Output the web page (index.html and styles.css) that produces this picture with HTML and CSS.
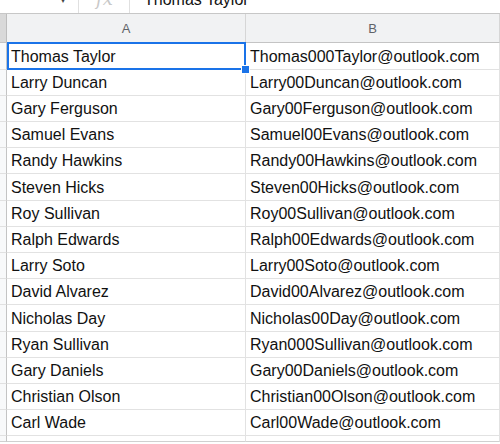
FILE: index.html
```html
<!DOCTYPE html>
<html>
<head>
<meta charset="utf-8">
<link rel="stylesheet" href="styles.css">
</head>
<body>
<div class="formula-bar">
  <span class="caret">▾</span>
  <span class="divider"></span>
  <span class="fx">fx</span>
  <span class="divider"></span>
  <span class="formula-text">Thomas Taylor</span>
</div>
<div class="sheet">
  <div class="corner"></div>
  <div class="col-head">A</div>
  <div class="col-head">B</div>

  <div class="row-head"></div><div class="cell selected-cell">Thomas Taylor<span class="selection"></span><span class="handle"></span></div><div class="cell">Thomas000Taylor@outlook.com</div>
  <div class="row-head"></div><div class="cell">Larry Duncan</div><div class="cell">Larry00Duncan@outlook.com</div>
  <div class="row-head"></div><div class="cell">Gary Ferguson</div><div class="cell">Gary00Ferguson@outlook.com</div>
  <div class="row-head"></div><div class="cell">Samuel Evans</div><div class="cell">Samuel00Evans@outlook.com</div>
  <div class="row-head"></div><div class="cell">Randy Hawkins</div><div class="cell">Randy00Hawkins@outlook.com</div>
  <div class="row-head"></div><div class="cell">Steven Hicks</div><div class="cell">Steven00Hicks@outlook.com</div>
  <div class="row-head"></div><div class="cell">Roy Sullivan</div><div class="cell">Roy00Sullivan@outlook.com</div>
  <div class="row-head"></div><div class="cell">Ralph Edwards</div><div class="cell">Ralph00Edwards@outlook.com</div>
  <div class="row-head"></div><div class="cell">Larry Soto</div><div class="cell">Larry00Soto@outlook.com</div>
  <div class="row-head"></div><div class="cell">David Alvarez</div><div class="cell">David00Alvarez@outlook.com</div>
  <div class="row-head"></div><div class="cell">Nicholas Day</div><div class="cell">Nicholas00Day@outlook.com</div>
  <div class="row-head"></div><div class="cell">Ryan Sullivan</div><div class="cell">Ryan000Sullivan@outlook.com</div>
  <div class="row-head"></div><div class="cell">Gary Daniels</div><div class="cell">Gary00Daniels@outlook.com</div>
  <div class="row-head"></div><div class="cell">Christian Olson</div><div class="cell">Christian00Olson@outlook.com</div>
  <div class="row-head"></div><div class="cell">Carl Wade</div><div class="cell">Carl00Wade@outlook.com</div>

  <div class="row-head tail"></div><div class="cell tail"></div><div class="cell tail"></div>
</div>
</body>
</html>
```
FILE: styles.css
```css
html, body {
  margin: 0;
  padding: 0;
  width: 500px;
  height: 444px;
  overflow: hidden;
  background: #ffffff;
  font-family: "Liberation Sans", Arial, sans-serif;
}

.formula-bar {
  height: 13px;
  border-bottom: 1px solid #c7c7c7;
  display: flex;
  align-items: flex-start;
  overflow: hidden;
  background: #ffffff;
}

.caret {
  margin-left: 60px;
  width: 10px;
  font-size: 12px;
  line-height: 12px;
  color: #444;
  margin-top: -7px;
}

.divider {
  width: 1px;
  height: 13px;
  background: #e0e0e0;
  margin-left: 8px;
}

.fx {
  margin-left: 17px;
  width: 25px;
  font-family: "DejaVu Serif", serif;
  font-style: italic;
  font-size: 18px;
  line-height: 18px;
  color: #c8c8c8;
  margin-top: -10px;
}

.fx + .divider {
  margin-left: 8px;
}

.formula-text {
  margin-left: 14px;
  font-size: 16px;
  line-height: 18px;
  color: #111;
  margin-top: -9px;
  white-space: nowrap;
}

.sheet {
  display: grid;
  grid-template-columns: 7px 239px 254px;
  grid-template-rows: 29px 27px 26px 26px 26px 26px 27px 26px 26px 26px 26px 27px 26px 26px 26px 26px 6px;
}

.corner {
  background: #d9d9d9;
  border-right: 1px solid #bdbdbd;
  border-bottom: 1px solid #c4c4c4;
  box-sizing: border-box;
}

.col-head {
  background: #f1f2f3;
  border-right: 1px solid #d6d6d6;
  border-bottom: 1px solid #c4c4c4;
  box-sizing: border-box;
  display: flex;
  align-items: center;
  justify-content: center;
  font-size: 13px;
  color: #5f6368;
  padding-top: 1px;
}

.row-head {
  background: #f8f9fa;
  border-right: 1px solid #c4c4c4;
  border-bottom: 1px solid #e1e1e1;
  box-sizing: border-box;
}

.cell {
  border-right: 1px solid #e2e2e2;
  border-bottom: 1px solid #e2e2e2;
  box-sizing: border-box;
  padding: 1px 4px 0 4px;
  display: flex;
  align-items: center;
  font-size: 16px;
  color: #111;
  white-space: nowrap;
}

.selected-cell {
  position: relative;
}

.selection {
  position: absolute;
  top: -1px;
  left: 0;
  right: -1px;
  bottom: -1px;
  border: 2px solid #1a73e8;
  pointer-events: none;
}

.handle {
  position: absolute;
  right: -5px;
  bottom: -5px;
  width: 7px;
  height: 7px;
  background: #1a73e8;
  border: 1px solid #ffffff;
  z-index: 2;
}

.tail {
  border-bottom: 1px solid #d0d0d0;
}
```
